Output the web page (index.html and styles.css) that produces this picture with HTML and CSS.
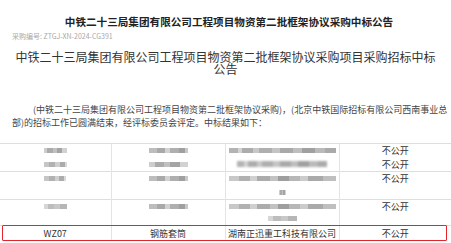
FILE: index.html
```html
<!DOCTYPE html>
<html lang="zh-CN">
<head>
<meta charset="utf-8">
<title>中标公告</title>
<link rel="stylesheet" href="styles.css">
</head>
<body>
<div class="doc">
  <h1 class="title">中铁二十三局集团有限公司工程项目物资第二批框架协议采购中标公告</h1>
  <div class="meta">采购编号: ZTGJ-XN-2024-CG391</div>
  <h2 class="notice-title">中铁二十三局集团有限公司工程项目物资第二批框架协议采购项目采购招标中标公告</h2>
  <p class="intro">(中铁二十三局集团有限公司工程项目物资第二批框架协议采购)，(北京中铁国际招标有限公司西南事业总部)的招标工作已圆满结束，经评标委员会评定。中标结果如下：</p>
</div>
<div class="results">
  <table>
    <colgroup>
      <col class="c1"><col class="c2"><col class="c3"><col class="c4">
    </colgroup>
    <tr class="r1">
      <td><div class="ln"><span class="bl w23 pa"></span></div><div class="ln"><span class="bl w23 pb"></span></div></td>
      <td><div class="ln"><span class="bl w39 pc"></span></div><div class="ln"><span class="bl w39 pa"></span></div></td>
      <td><div class="ln"><span class="bl w107 pl"></span></div><div class="ln"><span class="bl w90 pl soft"></span></div></td>
      <td><div class="ln">不公开</div><div class="ln">不公开</div></td>
    </tr>
    <tr class="r2">
      <td><div class="ln"><span class="bl w22 pb"></span></div></td>
      <td><div class="ln"><span class="bl w39 pc"></span></div></td>
      <td><div class="ln"><span class="bl w107 pm"></span></div><div class="ln"><span class="bl w7 pa"></span></div></td>
      <td><div class="ln">不公开</div></td>
    </tr>
    <tr class="r3">
      <td><div class="ln"><span class="bl w23 pd"></span></div></td>
      <td><div class="ln"><span class="bl w39 pc"></span></div></td>
      <td><div class="ln"><span class="bl w107 pm"></span></div><div class="ln"><span class="bl w29 pd"></span></div></td>
      <td><div class="ln">不公开</div></td>
    </tr>
    <tr class="r4">
      <td>WZ07</td>
      <td>钢筋套筒</td>
      <td>湖南正迅重工科技有限公司</td>
      <td>不公开</td>
    </tr>
  </table>
  <div class="highlight"></div>
</div>
</body>
</html>
```

FILE: styles.css
```css
html, body {
  margin: 0;
  background: #fff;
  overflow: hidden;
}
body {
  font-family: "Noto Sans CJK SC", "Noto Sans", sans-serif;
  width: 451px;
}
.doc {
  padding: 0 12px;
}
.title {
  margin: 15px 0 0;
  padding-left: 7px;
  font-size: 10.6px;
  line-height: 14px;
  font-weight: 700;
  color: #222;
  text-align: center;
}
.meta {
  margin-top: 1.5px;
  font-size: 7px;
  line-height: 10px;
  color: #a8a8a8;
}
.notice-title {
  margin: 10px 0 0;
  font-size: 12px;
  line-height: 12.6px;
  font-weight: 400;
  color: #333;
  text-align: center;
}
.intro {
  margin: 27px 0 0;
  width: 438px;
  font-size: 9px;
  line-height: 13.4px;
  text-indent: 21px;
  color: #444;
}
.results {
  position: relative;
  margin-top: 13.6px;
}
table {
  width: 451px;
  border-collapse: collapse;
  table-layout: fixed;
  font-size: 9px;
  color: #333;
  text-align: center;
}
.c1 { width: 111px; }
.c2 { width: 114px; }
.c3 { width: 114px; }
.c4 { width: 112px; }
td {
  padding: 0;
  border-top: 1px solid #dedede;
  border-left: 1px solid #e4e4e4;
  vertical-align: top;
  line-height: 13.5px;
}
td:first-child {
  border-left: none;
}
.ln {
  height: 13.5px;
  display: flex;
  align-items: center;
  justify-content: center;
}
.r3 .ln {
  height: 12.5px;
}
.r4 td {
  line-height: 15px;
  vertical-align: middle;
}
.bl {
  display: block;
  height: 5px;
  filter: blur(0.6px);
}
.soft { filter: blur(1.1px); height: 6px; }
.w7 { width: 7px; }
.w22 { width: 22px; }
.w23 { width: 23px; }
.w29 { width: 29px; }
.w39 { width: 39px; }
.w90 { width: 90px; }
.w107 { width: 107px; }
.pa {
  background: linear-gradient(90deg, #cdcdcd 0 15%, #ababab 15% 38%, #c0c0c0 38% 55%, #a4a4a4 55% 80%, #d2d2d2 80% 100%);
}
.pb {
  background: linear-gradient(90deg, #c6c6c6 0 22%, #b2b2b2 22% 50%, #cfcfcf 50% 70%, #acacac 70% 92%, #dadada 92% 100%);
}
.pc {
  background: linear-gradient(90deg, #bdbdbd 0 20%, #a9a9a9 20% 42%, #d2d2d2 42% 55%, #afafaf 55% 78%, #9f9f9f 78% 92%, #c8c8c8 92% 100%);
}
.pd {
  background: linear-gradient(90deg, #d6d6d6 0 18%, #bdbdbd 18% 45%, #c8c8c8 45% 70%, #b6b6b6 70% 100%);
}
.pl {
  background: linear-gradient(90deg, #b3b3b3 0 8%, #d2d2d2 8% 12%, #acacac 12% 22%, #c8c8c8 22% 28%, #afafaf 28% 40%, #c4c4c4 40% 48%, #a9a9a9 48% 60%, #bebebe 60% 68%, #a0a0a0 68% 80%, #bababa 80% 90%, #aaaaaa 90% 100%);
}
.pm {
  background: linear-gradient(90deg, #c8c8c8 0 9%, #b1b1b1 9% 20%, #d0d0d0 20% 26%, #acacac 26% 38%, #c2c2c2 38% 46%, #9e9e9e 46% 56%, #b7b7b7 56% 66%, #cbcbcb 66% 74%, #aaaaaa 74% 88%, #bfbfbf 88% 100%);
}
.highlight {
  position: absolute;
  left: 2px;
  top: 82px;
  width: 445px;
  height: 16px;
  box-sizing: border-box;
  border: 1.5px solid #e3262b;
  border-radius: 1px;
}
```
